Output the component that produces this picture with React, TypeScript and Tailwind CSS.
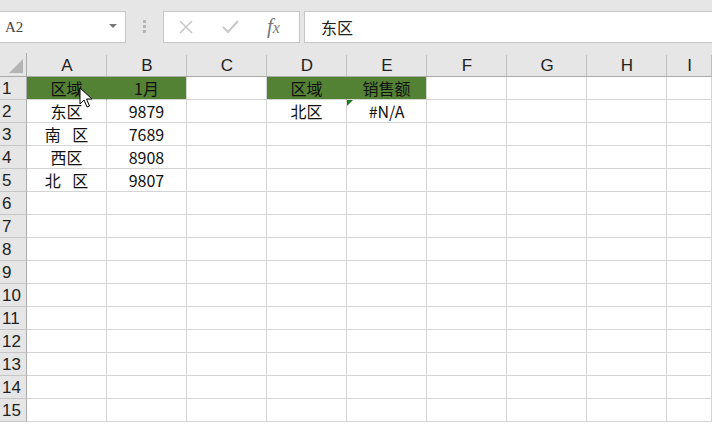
import { Fragment } from "react"

const cols = ["A", "B", "C", "D", "E", "F", "G", "H", "I"]
const rows = Array.from({ length: 15 }, (_, i) => i + 1)

const data: Record<string, string> = {
    A1: "区域",
    B1: "1月",
    D1: "区域",
    E1: "销售额",
    A2: "东区",
    B2: "9879",
    A3: "南 区",
    B3: "7689",
    A4: "西区",
    B4: "8908",
    A5: "北 区",
    B5: "9807",
    D2: "北区",
    E2: "#N/A",
}

const greenCells = ["A1", "B1", "D1", "E1"]

const Cursor = () => (
    <svg className="absolute left-[79px] top-[87px]" width="14" height="22" viewBox="0 0 14 22">
        <path d="M1 1 L1 17 L5 13 L8 20 L10.5 19 L7.5 12 L13 12 Z" fill="#fff" stroke="#000" strokeWidth="1" strokeLinejoin="miter" />
    </svg>
)

export default function App() {
    return (
        <div className="w-[712px] h-[425px] overflow-hidden bg-white relative" style={{ fontFamily: '"Noto Sans CJK SC", "Liberation Sans", sans-serif' }}>
            {/* formula bar */}
            <div className="h-[53px] bg-[#e6e6e6] flex items-center">
                <div className="w-[126px] h-[32px] bg-white border border-[#c6c6c6] border-l-0 flex items-center justify-between pl-[5px] pr-[8px]">
                    <span className="text-[15px] text-[#444] pt-[2px]" style={{ fontFamily: '"Liberation Serif", serif' }}>A2</span>
                    <svg width="8" height="5" viewBox="0 0 8 5"><path d="M0 0 H8 L4 4 Z" fill="#777" /></svg>
                </div>
                <div className="w-[37px] flex justify-center">
                    <div className="flex flex-col gap-[2px]">
                        <span className="w-[3px] h-[3px] bg-[#b5b5b5]" />
                        <span className="w-[3px] h-[3px] bg-[#b5b5b5]" />
                        <span className="w-[3px] h-[3px] bg-[#b5b5b5]" />
                    </div>
                </div>
                <div className="w-[137px] h-[32px] bg-white border border-[#c6c6c6] flex items-center">
                    <svg className="ml-[14px]" width="16" height="16" viewBox="0 0 16 16">
                        <path d="M2 2 L14 14 M14 2 L2 14" stroke="#c8c8c8" strokeWidth="1.6" />
                    </svg>
                    <svg className="ml-[28px]" width="17" height="15" viewBox="0 0 17 15">
                        <path d="M1 8 L6 13 L16 2" stroke="#c8c8c8" strokeWidth="2" fill="none" />
                    </svg>
                    <span className="ml-[28px] text-[21px] italic text-[#777] leading-none" style={{ fontFamily: '"Liberation Serif", serif' }}>
                        f<span className="text-[16px]">x</span>
                    </span>
                </div>
                <div className="flex-1 h-[32px] ml-[4px] bg-white border border-[#c6c6c6] border-r-0 flex items-center pl-[16px]">
                    <span className="text-[16px] text-[#222]">东区</span>
                </div>
            </div>

            {/* grid */}
            <div className="grid grid-cols-[27px_repeat(8,80px)_1fr] grid-rows-[24px_repeat(15,23px)]">
                <div className="bg-[#e6e6e6] border-r border-b border-[#ababab] flex items-end justify-end pr-[3px] pb-[3px]">
                    <svg width="14" height="14" viewBox="0 0 14 14"><path d="M14 0 V14 H0 Z" fill="#b4b4b4" /></svg>
                </div>
                {cols.map((c) => (
                    <div key={c} className="bg-[#e6e6e6] border-b border-[#ababab] relative flex items-center justify-center text-[17px] text-[#222] leading-none pt-[2px]" style={{ fontFamily: '"Liberation Sans", sans-serif' }}>
                        {c}
                        <span className="absolute right-0 top-[2px] bottom-0 w-px bg-[#c0c0c0]" />
                    </div>
                ))}
                {rows.map((r) => (
                    <Fragment key={r}>
                        <div className="bg-[#e6e6e6] border-r border-[#ababab] border-b border-b-[#c6c6c6] flex items-center pl-[2px] text-[17px] text-[#222] leading-none" style={{ fontFamily: '"Liberation Sans", sans-serif' }}>
                            {r}
                        </div>
                        {cols.map((c) => {
                            const id = c + r
                            const green = greenCells.includes(id)
                            const nextGreen = greenCells.includes(cols[cols.indexOf(c) + 1] + r)
                            return (
                                <div
                                    key={id}
                                    className={
                                        "relative flex items-center justify-center text-[16px] text-[#111] border-b whitespace-pre [word-spacing:8px] " +
                                        (green ? "bg-[#548235] border-b-[#d4d4d4] " : "border-[#d4d4d4] ") +
                                        (green && nextGreen ? "border-r border-r-[#548235]" : "border-r border-r-[#d4d4d4]")
                                    }
                                >
                                    {data[id]}
                                    {id === "E2" && (
                                        <span className="absolute left-0 top-0 w-0 h-0 border-t-[6px] border-t-[#1e7b1e] border-r-[6px] border-r-transparent" />
                                    )}
                                </div>
                            )
                        })}
                    </Fragment>
                ))}
            </div>
            <Cursor />
        </div>
    )
}
